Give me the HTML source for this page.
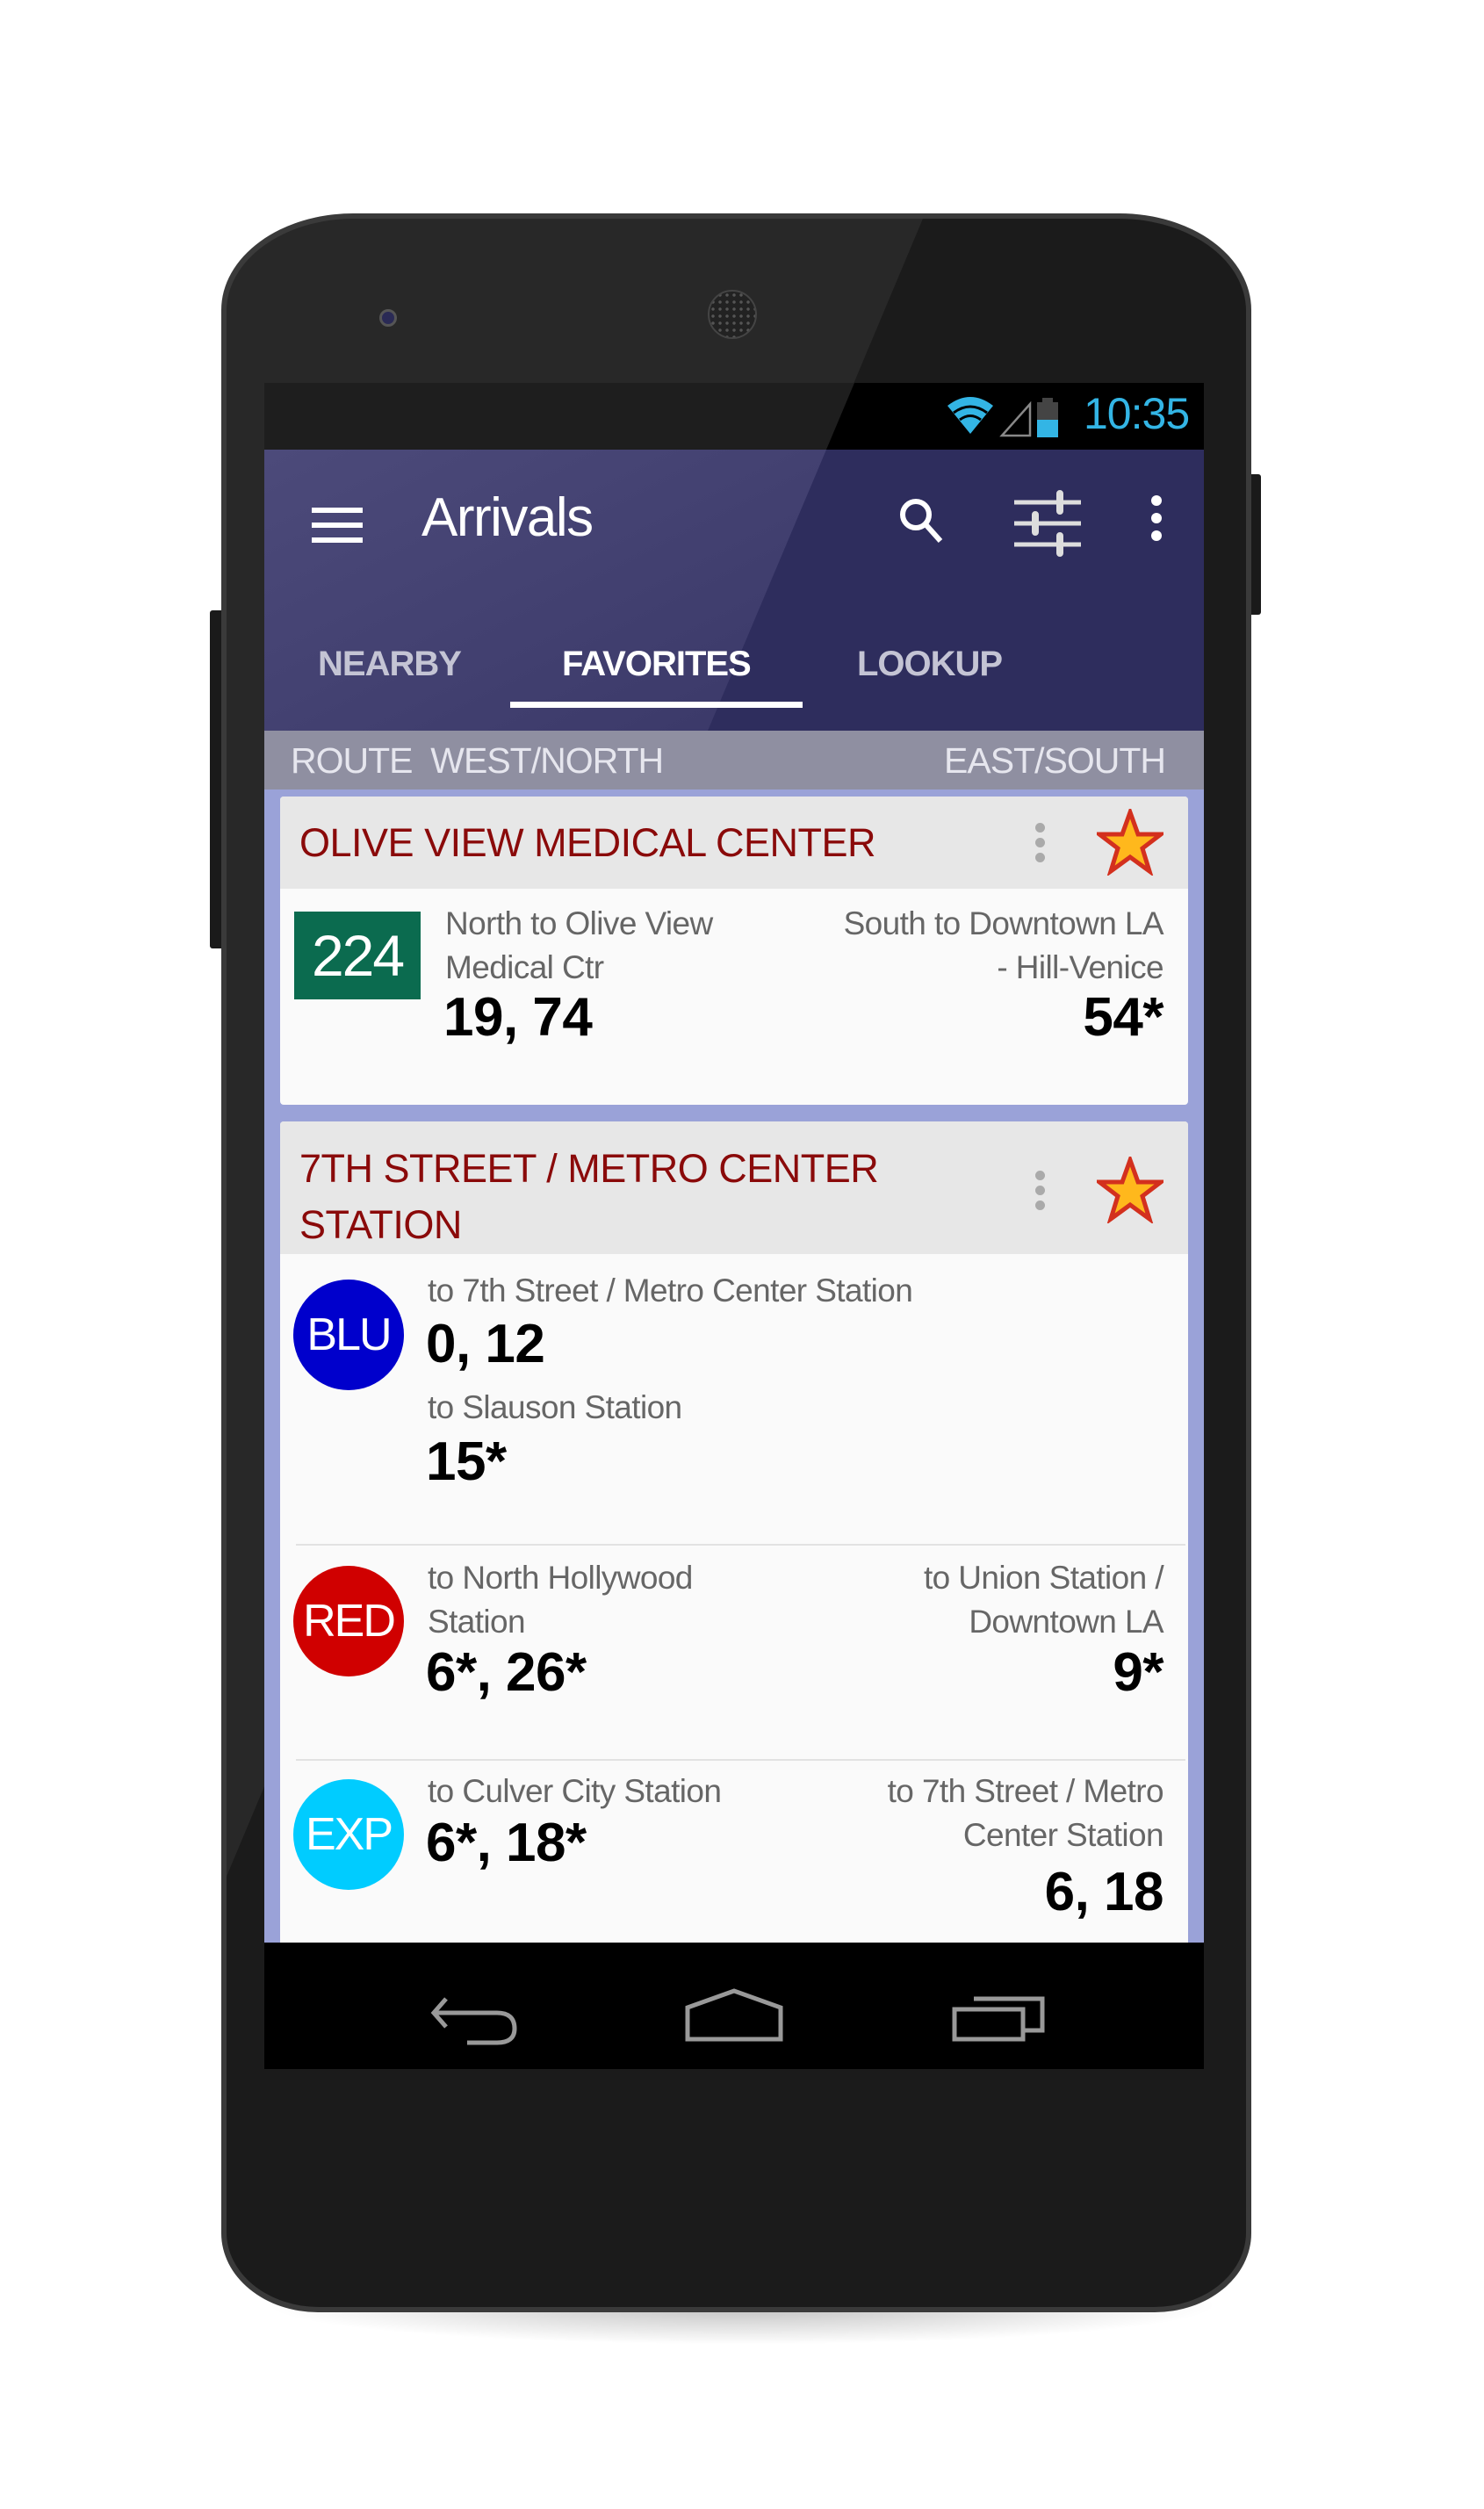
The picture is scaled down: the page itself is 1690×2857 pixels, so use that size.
<!DOCTYPE html>
<html><head><meta charset="utf-8"><style>
*{margin:0;padding:0;box-sizing:border-box}
body{width:1690px;height:2857px;background:#fff;position:relative;overflow:hidden;font-family:"Liberation Sans",sans-serif}
.a{position:absolute;white-space:nowrap}
.sub{font-size:37px;color:#666;letter-spacing:-0.6px;line-height:50px}
.tm{font-size:62px;font-weight:bold;color:#000;letter-spacing:-0.5px}
.r{text-align:right}
.circ{position:absolute;width:126px;height:126px;border-radius:50%;color:#fff;font-size:52px;text-align:center;line-height:126px;letter-spacing:-2px}
.ct{font-size:45px;color:#8a0a0a;letter-spacing:-0.5px}
</style></head><body>
<div class="a" style="left:300px;top:2580px;width:1090px;height:90px;border-radius:50%;background:radial-gradient(ellipse at center,rgba(0,0,0,0.25),rgba(0,0,0,0) 70%)"></div>
<div class="a" style="left:1418px;top:540px;width:18px;height:160px;background:#1a1a1a;border-radius:3px"></div>
<div class="a" style="left:239px;top:695px;width:18px;height:385px;background:#1a1a1a;border-radius:3px"></div>
<div class="a" style="left:252px;top:243px;width:1173px;height:2390px;border-radius:150px 150px 110px 110px/110px 110px 90px 90px;background:#3a3a3a"></div>
<div class="a" style="left:258px;top:249px;width:1161px;height:2378px;border-radius:145px 145px 105px 105px/105px 105px 85px 85px;background:#1b1b1b;overflow:hidden">
 <svg style="position:absolute;left:0;top:0" width="1161" height="2378"><polygon points="0,0 793,0 -206,2378 0,2378" fill="#fff" fill-opacity="0.06"/></svg>
</div>
<div class="a" style="left:432px;top:352px;width:20px;height:20px;border-radius:50%;background:#2a2a55;border:3px solid #555"></div>
<div class="a" style="left:806px;top:330px;width:56px;height:56px;border-radius:50%;background:radial-gradient(#555 1.5px,#222 2px) 0 0/8px 8px;border:2px solid #444"></div>
<div class="a" style="left:301px;top:436px;width:1070px;height:1920px;background:#000;overflow:hidden">
 <div class="a" style="left:0;top:0;width:1070px;height:76px;background:#000"></div>
 <div class="a" style="left:0;top:76px;width:1070px;height:320px;background:#2e2d5d"></div>
 <svg class="a" style="left:0;top:0" width="1070" height="396"><defs><linearGradient id="g" x1="0" y1="0" x2="1" y2="1"><stop offset="0" stop-color="#4c4a7a"/><stop offset="1" stop-color="#3a3868"/></linearGradient></defs>
  <polygon points="0,0 672,0 640,76 0,76" fill="#1e1e1e"/>
  <polygon points="0,76 640,76 505,396 0,396" fill="url(#g)"/></svg>
 <svg class="a" style="left:768px;top:8px" width="240" height="60" viewBox="0 0 240 60">
  <path d="M10 18 Q36 -2 62 18 L36 50 Z" fill="#33b5e5"/>
  <path d="M17 26 Q36 12 55 26" stroke="#000" stroke-width="3" fill="none"/>
  <path d="M24 34 Q36 25 48 34" stroke="#000" stroke-width="3" fill="none"/>
  <path d="M72 52 L104 16 L104 52 Z" fill="none" stroke="#888" stroke-width="2.5"/>
  <rect x="112" y="14" width="24" height="40" fill="#444"/>
  <rect x="118" y="9" width="12" height="6" fill="#444"/>
  <rect x="112" y="34" width="24" height="20" fill="#33b5e5"/>
 </svg>
 <div class="a" style="left:933px;top:6px;font-size:50px;color:#33b5e5;letter-spacing:-1px">10:35</div>
 <div class="a" style="left:54px;top:142px;width:58px;height:6px;background:#fff"></div>
 <div class="a" style="left:54px;top:159px;width:58px;height:6px;background:#fff"></div>
 <div class="a" style="left:54px;top:176px;width:58px;height:6px;background:#fff"></div>
 <div class="a" style="left:179px;top:118px;font-size:62px;color:#fff;letter-spacing:-1.5px">Arrivals</div>
 <svg class="a" style="left:720px;top:128px" width="60" height="60" viewBox="0 0 60 60"><circle cx="22" cy="22" r="15" stroke="#fff" stroke-width="6" fill="none"/><path d="M33 33 L50 52" stroke="#fff" stroke-width="6"/></svg>
 <svg class="a" style="left:852px;top:122px" width="80" height="76" viewBox="0 0 80 76">
  <g stroke="#ddd" stroke-width="5"><path d="M2 14H78M2 38H78M2 62H78"/></g>
  <g stroke="#ddd" stroke-width="8" stroke-linecap="round"><path d="M54 4V24M26 28V48M54 52V72"/></g>
 </svg>
 <div class="a" style="left:1010px;top:128px;width:12px;height:12px;border-radius:50%;background:#fff"></div>
 <div class="a" style="left:1010px;top:148px;width:12px;height:12px;border-radius:50%;background:#fff"></div>
 <div class="a" style="left:1010px;top:168px;width:12px;height:12px;border-radius:50%;background:#fff"></div>
 <div class="a" style="left:61px;top:298px;font-size:40px;font-weight:bold;color:#c4c4d4;letter-spacing:-1px">NEARBY</div>
 <div class="a" style="left:339px;top:298px;font-size:40px;font-weight:bold;color:#fff;letter-spacing:-1px">FAVORITES</div>
 <div class="a" style="left:675px;top:298px;font-size:40px;font-weight:bold;color:#c4c4d4;letter-spacing:-1px">LOOKUP</div>
 <div class="a" style="left:280px;top:363px;width:333px;height:7px;background:#fff"></div>
 <div class="a" style="left:0;top:396px;width:1070px;height:67px;background:#8f8fa1"></div>
 <div class="a" style="left:30px;top:407px;font-size:41px;color:#e6e6ee;letter-spacing:-1px">ROUTE&nbsp;&nbsp;WEST/NORTH</div>
 <div class="a r" style="right:44px;top:407px;font-size:41px;color:#e6e6ee;letter-spacing:-1px">EAST/SOUTH</div>
 <div class="a" style="left:0;top:463px;width:1070px;height:1313px;background:#9aa2d8"></div>
 <div class="a" style="left:18px;top:471px;width:1034px;height:351px;background:#fafafa;border-radius:4px;overflow:hidden">
  <div class="a" style="left:0;top:0;width:1034px;height:105px;background:#e7e7e7"></div>
  <div class="a ct" style="left:22px;top:27px">OLIVE VIEW MEDICAL CENTER</div>
  <div class="a" style="left:860px;top:30px;width:11px;height:11px;border-radius:50%;background:#aaa"></div>
  <div class="a" style="left:860px;top:47px;width:11px;height:11px;border-radius:50%;background:#aaa"></div>
  <div class="a" style="left:860px;top:64px;width:11px;height:11px;border-radius:50%;background:#aaa"></div>
  <svg class="a" style="left:930px;top:14px" width="76" height="76" viewBox="0 0 76 76"><path d="M38 4 L47 29 L73 29 L52 45 L60 71 L38 55 L16 71 L24 45 L3 29 L29 29 Z" fill="#ffb81c" stroke="#d3301e" stroke-width="5"/></svg>
  <div class="a" style="left:16px;top:131px;width:144px;height:100px;background:#0b6b4f;color:#fff;font-size:66px;text-align:center;line-height:100px;letter-spacing:-2px">224</div>
  <div class="a sub" style="left:188px;top:120px">North to Olive View<br>Medical Ctr</div>
  <div class="a sub r" style="right:28px;top:120px">South to Downtown LA<br>- Hill-Venice</div>
  <div class="a tm" style="left:186px;top:216px">19, 74</div>
  <div class="a tm r" style="right:28px;top:216px">54*</div>
 </div>
 <div class="a" style="left:18px;top:841px;width:1034px;height:1000px;background:#fafafa;border-radius:4px;overflow:hidden">
  <div class="a" style="left:0;top:0;width:1034px;height:151px;background:#e7e7e7"></div>
  <div class="a ct" style="left:22px;top:22px;line-height:64px">7TH STREET / METRO CENTER<br>STATION</div>
  <div class="a" style="left:860px;top:56px;width:11px;height:11px;border-radius:50%;background:#aaa"></div>
  <div class="a" style="left:860px;top:73px;width:11px;height:11px;border-radius:50%;background:#aaa"></div>
  <div class="a" style="left:860px;top:90px;width:11px;height:11px;border-radius:50%;background:#aaa"></div>
  <svg class="a" style="left:930px;top:40px" width="76" height="76" viewBox="0 0 76 76"><path d="M38 4 L47 29 L73 29 L52 45 L60 71 L38 55 L16 71 L24 45 L3 29 L29 29 Z" fill="#ffb81c" stroke="#d3301e" stroke-width="5"/></svg>
  <div class="circ" style="left:15px;top:180px;background:#0000cc">BLU</div>
  <div class="a sub" style="left:168px;top:168px">to 7th Street / Metro Center Station</div>
  <div class="a tm" style="left:166px;top:218px">0, 12</div>
  <div class="a sub" style="left:168px;top:301px">to Slauson Station</div>
  <div class="a tm" style="left:166px;top:352px">15*</div>
  <div class="a" style="left:18px;top:481px;width:1013px;height:2px;background:#e2e2e2"></div>
  <div class="circ" style="left:15px;top:506px;background:#d00000">RED</div>
  <div class="a sub" style="left:168px;top:495px">to North Hollywood<br>Station</div>
  <div class="a sub r" style="right:28px;top:495px">to Union Station /<br>Downtown LA</div>
  <div class="a tm" style="left:166px;top:592px">6*, 26*</div>
  <div class="a tm r" style="right:28px;top:592px">9*</div>
  <div class="a" style="left:18px;top:726px;width:1013px;height:2px;background:#e2e2e2"></div>
  <div class="circ" style="left:15px;top:749px;background:#00ccff">EXP</div>
  <div class="a sub" style="left:168px;top:738px">to Culver City Station</div>
  <div class="a sub r" style="right:28px;top:738px">to 7th Street / Metro<br>Center Station</div>
  <div class="a tm" style="left:166px;top:786px">6*, 18*</div>
  <div class="a tm r" style="right:28px;top:842px">6, 18</div>
 </div>
 <div class="a" style="left:0;top:1776px;width:1070px;height:144px;background:#000"></div>
 <svg class="a" style="left:185px;top:1836px" width="110" height="60" viewBox="0 0 110 60">
  <path d="M8 20 H80 Q100 20 100 38 Q100 54 80 54 H46" fill="none" stroke="#999" stroke-width="5"/>
  <path d="M22 4 L8 20 L22 36" fill="none" stroke="#999" stroke-width="5"/>
 </svg>
 <svg class="a" style="left:478px;top:1828px" width="114" height="62" viewBox="0 0 114 62"><path d="M4 22 L57 3 L110 22 V58 H4 Z" fill="none" stroke="#999" stroke-width="5"/></svg>
 <svg class="a" style="left:782px;top:1830px" width="110" height="60" viewBox="0 0 110 60">
  <path d="M4 22 H82 V56 H4 Z" fill="none" stroke="#999" stroke-width="5"/>
  <path d="M26 10 H104 V46 H84" fill="none" stroke="#999" stroke-width="5"/>
 </svg>
</div>
</body></html>
